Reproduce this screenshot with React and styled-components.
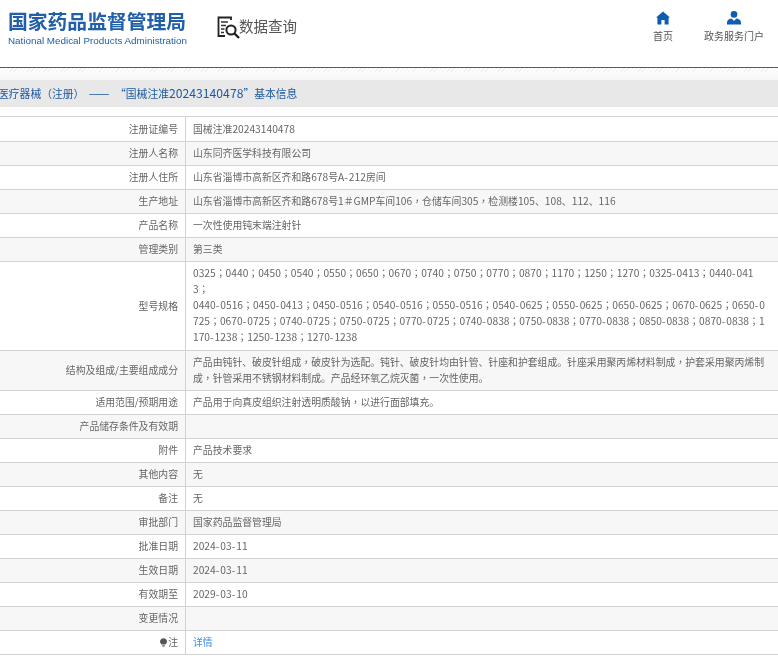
import React from "react";
import styled, { createGlobalStyle } from "styled-components";

const rows = [
  { label: "注册证编号", value: "国械注准20243140478" },
  { label: "注册人名称", value: "山东同齐医学科技有限公司" },
  { label: "注册人住所", value: "山东省淄博市高新区齐和路678号A-212房间" },
  { label: "生产地址", value: "山东省淄博市高新区齐和路678号1＃GMP车间106，仓储车间305，检测楼105、108、112、116" },
  { label: "产品名称", value: "一次性使用钝末端注射针" },
  { label: "管理类别", value: "第三类" },
  {
    label: "型号规格",
    tall: true,
    value:
      "0325；0440；0450；0540；0550；0650；0670；0740；0750；0770；0870；1170；1250；1270；0325-0413；0440-0413；\n0440-0516；0450-0413；0450-0516；0540-0516；0550-0516；0540-0625；0550-0625；0650-0625；0670-0625；0650-0725；0670-0725；0740-0725；0750-0725；0770-0725；0740-0838；0750-0838；0770-0838；0850-0838；0870-0838；1170-1238；1250-1238；1270-1238",
  },
  {
    label: "结构及组成/主要组成成分",
    value:
      "产品由钝针、破皮针组成，破皮针为选配。钝针、破皮针均由针管、针座和护套组成。针座采用聚丙烯材料制成，护套采用聚丙烯制成，针管采用不锈钢材料制成。产品经环氧乙烷灭菌，一次性使用。",
  },
  { label: "适用范围/预期用途", value: "产品用于向真皮组织注射透明质酸钠，以进行面部填充。" },
  { label: "产品储存条件及有效期", value: "" },
  { label: "附件", value: "产品技术要求" },
  { label: "其他内容", value: "无" },
  { label: "备注", value: "无" },
  { label: "审批部门", value: "国家药品监督管理局" },
  { label: "批准日期", value: "2024-03-11" },
  { label: "生效日期", value: "2024-03-11" },
  { label: "有效期至", value: "2029-03-10" },
  { label: "变更情况", value: "" },
];

// digits and fullwidth punctuation sit a little differently from the chinese text
const formatText = (text) =>
  text.split(/([0-9A-Za-z]+|-|[；，（）“”])/).map((part, i) => {
    if (/^[0-9A-Za-z]+$/.test(part)) return <Latin key={i}>{part}</Latin>;
    if (part === "-") return <Hyphen key={i}>-</Hyphen>;
    if (/^[；，（）“”]$/.test(part)) return <Punct key={i}>{part}</Punct>;
    return part;
  });

const App = () => {
  return (
    <Page>
      <GlobalStyle />
      <Header>
        <Logo>
          <LogoCn>国家药品监督管理局</LogoCn>
          <LogoEn>National Medical Products Administration</LogoEn>
        </Logo>
        <Query>
          <svg width="23" height="24" viewBox="0 0 23 24" fill="none">
            <path d="M14 4V1.5H1.5V20H8" stroke="#222" strokeWidth="1.8" />
            <path d="M4 6H11M4 9.5H9M4 13H7.5M4 16.5H7" stroke="#333" strokeWidth="1.5" />
            <circle cx="14" cy="14" r="4.6" stroke="#222" strokeWidth="2" />
            <path d="M17.5 17.5L22 22" stroke="#222" strokeWidth="2.4" />
          </svg>
          <span>数据查询</span>
        </Query>
        <Nav>
          <NavItem>
            <svg width="14" height="14" viewBox="0 0 14 14">
              <path d="M7 0.5L14 6.6H12.6V13.5H8.6V9H5.4V13.5H1.4V6.6H0Z" fill="#0f5cb3" />
            </svg>
            <span>首页</span>
          </NavItem>
          <NavItem>
            <svg width="14" height="14" viewBox="0 0 14 14">
              <circle cx="7" cy="3.4" r="3.3" fill="#0f5cb3" />
              <path d="M0 13.5V11.5C0 9.5 2 8 4.6 7.6L7 10L9.4 7.6C12 8 14 9.5 14 11.5V13.5Z" fill="#0f5cb3" />
            </svg>
            <span>政务服务门户</span>
          </NavItem>
        </Nav>
      </Header>
      <Hatch />
      <Title>
        {formatText("医疗器械（注册）")} <Dash>——</Dash> {formatText("“国械注准20243140478”基本信息")}
      </Title>
      <Table>
        <tbody>
          {rows.map((row, i) => (
            <Row key={row.label} $even={i % 2 === 1}>
              <Label>{row.label}</Label>
              <Value $tall={row.tall}>{formatText(row.value)}</Value>
            </Row>
          ))}
          <Row>
            <Label>
              <Bulb viewBox="0 0 8 10" width="7" height="9">
                <path d="M4 0C1.8 0 0 1.6 0 3.8 0 5.4 1.2 6.2 2 7.4H6C6.8 6.2 8 5.4 8 3.8 8 1.6 6.2 0 4 0ZM2.6 8H5.4V9.5H2.6Z" fill="#555" />
              </Bulb>
              注
            </Label>
            <Value>
              <Detail href="#">详情</Detail>
            </Value>
          </Row>
        </tbody>
      </Table>
    </Page>
  );
};

const GlobalStyle = createGlobalStyle`
  html, body {
    margin: 0;
    padding: 0;
    background: #fff;
    overflow: hidden;
  }
  body {
    font-family: "Liberation Sans", "Noto Sans CJK SC", sans-serif;
  }
`;

const Page = styled.div`
  width: 778px;
  height: 659px;
  overflow: hidden;
  filter: blur(0.3px);
`;

const Header = styled.header`
  height: 67px;
  display: flex;
  align-items: flex-start;
  padding-left: 8px;
  border-bottom: 1px solid #1e6aa8;
`;

const Logo = styled.div`
  width: 178px;
  padding-top: 9px;
  color: #2160a8;
`;

const LogoCn = styled.div`
  font-family: "Noto Sans CJK SC", sans-serif;
  font-size: 19.8px;
  line-height: 24px;
  font-weight: 700;
  white-space: nowrap;
`;

const LogoEn = styled.div`
  font-size: 9.85px;
  line-height: 12px;
  margin-top: 2px;
  white-space: nowrap;
`;

const Query = styled.div`
  display: flex;
  align-items: center;
  margin-left: 31px;
  margin-top: 16px;
  color: #555;
  font-family: "Noto Sans CJK SC", sans-serif;
  font-size: 14.5px;
  line-height: 22px;
  span {
    margin-left: -1px;
    margin-top: -5px;
  }
`;

const Nav = styled.nav`
  margin-left: auto;
  display: flex;
  padding-top: 11px;
  padding-right: 14px;
  gap: 31px;
`;

const NavItem = styled.div`
  display: flex;
  flex-direction: column;
  align-items: center;
  gap: 5px;
  color: #555;
  font-family: "Noto Sans CJK SC", sans-serif;
  font-size: 10px;
  line-height: 12px;
`;

const Hatch = styled.div`
  height: 12px;
  background:
    repeating-linear-gradient(135deg, #f0f0f0 0 1px, #fff 1px 3px) top / 100% 4px no-repeat,
    linear-gradient(#fff, #f6f6f6);
`;

const Latin = styled.span`
  font-size: 1.04em;
`;

const Hyphen = styled.span`
  font-size: 1.04em;
  letter-spacing: 1px;
`;

const Punct = styled.span`
  font-family: "Noto Sans CJK TC", sans-serif;
`;

const Dash = styled.span`
  display: inline-block;
  margin: 0 3px 0 2px;
  font-size: 1.15em;
`;

const Title = styled.div`
  height: 27px;
  margin-left: -2px;
  background: #e8e8e8;
  color: #1d5aa0;
  font-family: "Noto Sans CJK SC", sans-serif;
  font-size: 10.8px;
  line-height: 27px;
  white-space: nowrap;
  ${Latin} {
    font-size: 1.13em;
  }
`;

const Table = styled.table`
  width: 778px;
  margin-top: 9px;
  border-collapse: collapse;
  table-layout: fixed;
  font-family: "Noto Sans CJK SC", sans-serif;
  font-size: 9.85px;
  line-height: 16px;
  color: #666;
`;

const Row = styled.tr`
  background: ${(p) => (p.$even ? "#f7f7f7" : "#fff")};
  border-top: 1px solid #d2d2d2;
  border-bottom: 1px solid #d2d2d2;
  &:first-child td {
    padding-top: 4px;
  }
`;

const Label = styled.td`
  width: 178px;
  box-sizing: content-box;
  padding: 3px 7px 4px 0;
  text-align: right;
  border-right: 1px solid #d2d2d2;
`;

const Value = styled.td`
  padding: 3px 10px ${(p) => (p.$tall ? "5px" : "4px")} 7px;
  white-space: pre-wrap;
  word-break: break-all;
`;

const Bulb = styled.svg`
  margin-right: 1px;
  vertical-align: -1px;
`;

const Detail = styled.a`
  color: #3d8fe0;
  text-decoration: none;
`;

export default App;
